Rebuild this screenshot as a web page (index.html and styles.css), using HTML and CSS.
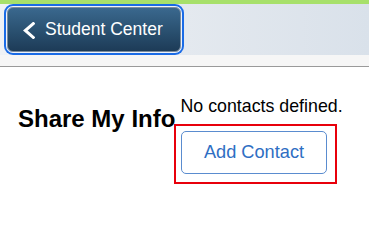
FILE: index.html
```html
<!DOCTYPE html>
<html lang="en">
<head>
<meta charset="utf-8">
<title>Share My Info</title>
<link rel="stylesheet" href="styles.css">
</head>
<body>
<div class="topbar"></div>
<header class="header">
  <button class="back" type="button">
    <svg class="chev" width="12" height="17" viewBox="0 0 12 17" aria-hidden="true">
      <polyline points="10.3,1.6 2.3,8.5 10.3,15.4" fill="none" stroke="#fff" stroke-width="3" stroke-linecap="square" stroke-linejoin="miter"/>
    </svg>
    <span>Student Center</span>
  </button>
</header>
<div class="subbar"></div>
<main class="main">
  <h1 class="title">Share My Info</h1>
  <section class="contacts">
    <p class="empty">No contacts defined.</p>
    <div class="highlight">
      <button class="add" type="button">Add Contact</button>
    </div>
  </section>
</main>
</body>
</html>
```

FILE: styles.css
```css
html, body {
  margin: 0;
  padding: 0;
  background: #fff;
  font-family: "Liberation Sans", Arial, sans-serif;
  color: #000;
}

.topbar {
  height: 4px;
  background: #a7e06b;
}

.header {
  height: 45px;
  padding: 3px 0 3px 7px;
  background: linear-gradient(to right, #eff2f6 0%, #e4e9ef 50%, #d9e1ea 100%);
  display: flex;
}

.back {
  width: 174px;
  height: 45px;
  box-sizing: border-box;
  border: 1px solid #7d8d9d;
  border-radius: 6px;
  box-shadow: 0 0 0 1px #eef3fa, 0 0 0 3px #1a6be6;
  background: linear-gradient(to bottom, #3a688e 0%, #2b5272 50%, #1d3b57 100%);
  color: #fff;
  font-family: "Liberation Sans", Arial, sans-serif;
  font-size: 17.5px;
  display: flex;
  align-items: center;
  padding: 0 0 0 15px;
  gap: 10px;
  cursor: pointer;
}

.chev {
  display: block;
  flex: none;
  margin-top: 1px;
}

.subbar {
  height: 11px;
  background: #f6f6f6;
  border-bottom: 1px solid #9a9a9a;
}

.main {
  display: flex;
  padding-left: 18px;
}

.title {
  flex: 0 0 162.5px;
  margin: 38px 0 0 0;
  font-size: 24px;
  line-height: 28px;
  font-weight: bold;
  white-space: nowrap;
}

.contacts {
  margin-top: 29px;
  display: flex;
  flex-direction: column;
  align-items: flex-start;
}

.empty {
  margin: 0;
  font-size: 17.8px;
  line-height: 20px;
}

.highlight {
  margin: 8px 0 0 -6.5px;
  border: 2px solid #e8000b;
  padding: 5px 8px 8px 5px;
}

.add {
  width: 146px;
  height: 43px;
  box-sizing: border-box;
  border: 1px solid #5a8ccf;
  border-radius: 5px;
  background: #fff;
  color: #2e6ec3;
  font-family: "Liberation Sans", Arial, sans-serif;
  font-size: 18.2px;
  padding: 0;
  cursor: pointer;
}
```
